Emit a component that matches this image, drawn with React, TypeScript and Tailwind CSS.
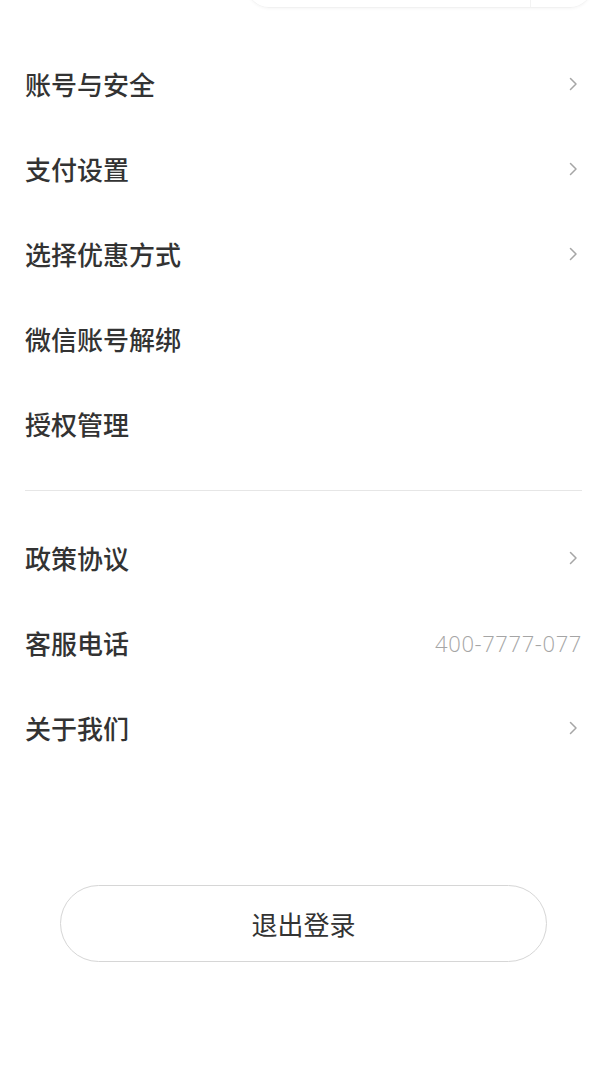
import React from 'react';

const font = { fontFamily: '"Noto Sans CJK SC", "Noto Sans", sans-serif' };

const Chevron: React.FC = () => (
  <svg width="9" height="14" viewBox="0 0 9 14" fill="none" className="mr-[4px]">
    <path d="M1.5 1.5 L7 7 L1.5 12.5" stroke="#a6a6a6" strokeWidth="1.5" strokeLinecap="round" strokeLinejoin="round" />
  </svg>
);

type Row = { label: string; arrow?: boolean; value?: string };

const groupA: Row[] = [
  { label: '账号与安全', arrow: true },
  { label: '支付设置', arrow: true },
  { label: '选择优惠方式', arrow: true },
  { label: '微信账号解绑' },
  { label: '授权管理' },
];

const groupB: Row[] = [
  { label: '政策协议', arrow: true },
  { label: '客服电话', value: '400-7777-077' },
  { label: '关于我们', arrow: true },
];

const SettingRow: React.FC<{ row: Row }> = ({ row }) => (
  <div className="flex h-[85px] items-center justify-between">
    <span className="text-[26px] font-medium leading-none text-[#333333]">{row.label}</span>
    {row.arrow && <Chevron />}
    {row.value && (
      <span
        className="text-[22px] font-light leading-none tracking-[0.6px] text-[#a5a5a5]"
        style={{ fontFamily: '"Open Sans", sans-serif' }}
      >
        {row.value}
      </span>
    )}
  </div>
);

export default function App() {
  return (
    <div className="min-h-screen overflow-hidden bg-white" style={font}>
      {/* top card, mostly scrolled off */}
      <div className="flex justify-end pr-[15px]">
        <div className="-mt-[40px] flex h-[48px] w-[345px] rounded-b-[22px] border-b border-[#f1f1f1] shadow-[0_1px_3px_rgba(0,0,0,0.04)]">
          <div className="flex-1" />
          <div className="w-[62px] border-l border-[#f3f3f3]" />
        </div>
      </div>

      <div className="mt-[33px] px-[25px]">
        {groupA.map((r) => (
          <SettingRow key={r.label} row={r} />
        ))}
        <div className="mb-[24px] mt-[24px] h-px bg-[#e6e6e6]" />
        {groupB.map((r) => (
          <SettingRow key={r.label} row={r} />
        ))}
      </div>

      <div className="mt-[115px] flex justify-center">
        <button className="flex h-[77px] w-[487px] items-center justify-center rounded-full border-[1.5px] border-[#d6d6d6] bg-white text-[26px] leading-none text-[#333333]">
          退出登录
        </button>
      </div>
    </div>
  );
}
